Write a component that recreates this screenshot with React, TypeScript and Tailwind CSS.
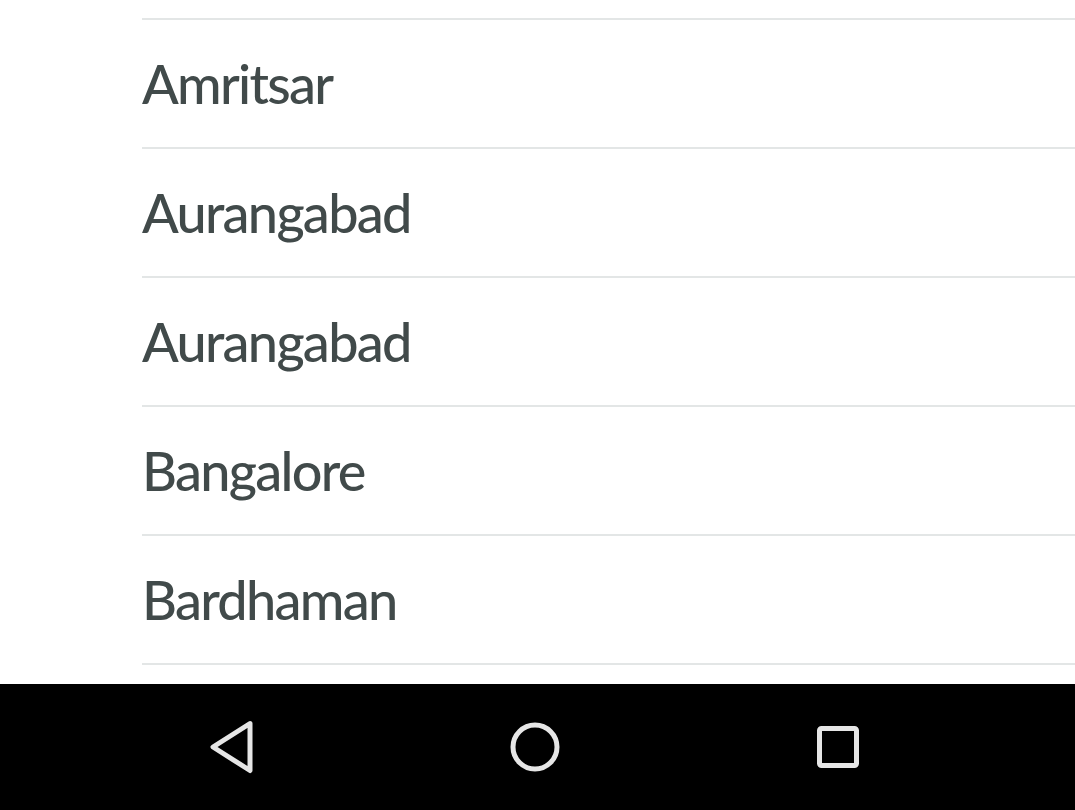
import * as React from 'react'

const CITIES = ['Amritsar', 'Aurangabad', 'Aurangabad', 'Bangalore', 'Bardhaman']

function BackIcon() {
  return (
    <svg width="48" height="54" viewBox="0 0 48 54" fill="none">
      <path
        d="M42 3.5 L5 27 L42 50.5 Z"
        stroke="#e6e6e6"
        strokeWidth="5"
        strokeLinejoin="round"
      />
    </svg>
  )
}

function HomeIcon() {
  return (
    <svg width="54" height="54" viewBox="0 0 54 54" fill="none">
      <circle cx="27" cy="27" r="22" stroke="#e6e6e6" strokeWidth="5" />
    </svg>
  )
}

function RecentsIcon() {
  return (
    <svg width="46" height="46" viewBox="0 0 46 46" fill="none">
      <rect
        x="4.5"
        y="4.5"
        width="37"
        height="37"
        rx="2"
        stroke="#e6e6e6"
        strokeWidth="5"
      />
    </svg>
  )
}

export default function App() {
  return (
    <div className="flex h-[810px] w-[1075px] flex-col overflow-hidden bg-white font-['Lato',sans-serif]">
      <div className="flex h-[684px] flex-col pl-[142px]">
        <div className="h-[18px]" />
        {CITIES.map((city, i) => (
          <div
            key={i}
            className="flex h-[129px] items-center border-t-2 border-[#e3e6e6] text-[54px] font-medium leading-none tracking-[-1.7px] text-[#414a4a]"
          >
            {city}
          </div>
        ))}
        <div className="border-t-2 border-[#e3e6e6]" />
      </div>
      <div className="flex h-[126px] items-center bg-black">
        <div className="flex w-[232px] justify-end">
          <div className="-mr-[24px]">
            <BackIcon />
          </div>
        </div>
        <div className="flex flex-1 items-center">
          <div className="ml-[276px]">
            <HomeIcon />
          </div>
          <div className="ml-[253px]">
            <RecentsIcon />
          </div>
        </div>
      </div>
    </div>
  )
}
